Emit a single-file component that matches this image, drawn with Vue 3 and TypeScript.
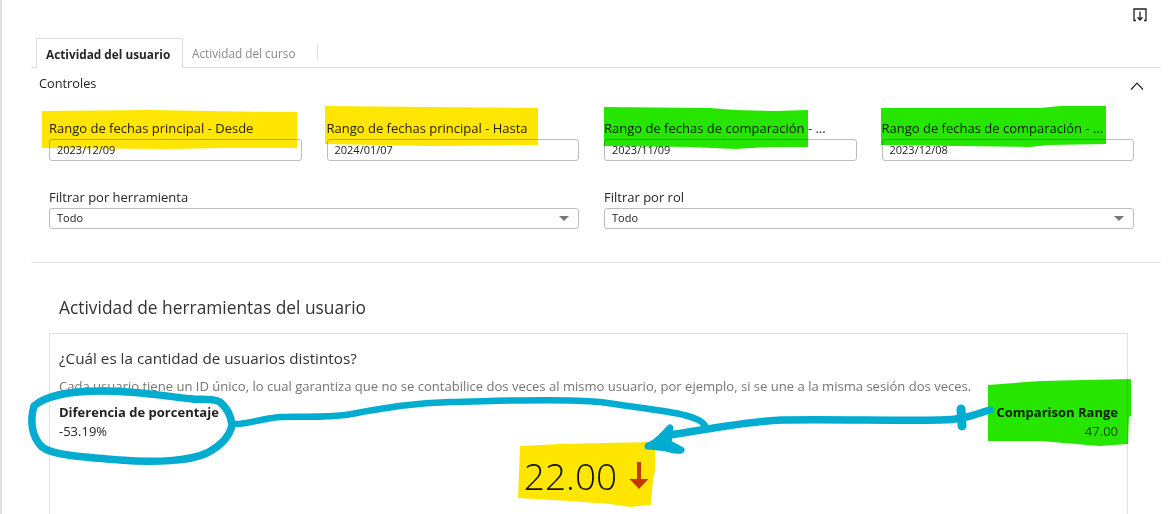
<template>
  <div class="page">
    <div class="content">
      <div class="toolbar">
        <svg class="export-icon" width="14" height="14" viewBox="0 0 14 14" fill="none">
          <path d="M3 12.500H1V1h12v11.500h-2" stroke="#222" stroke-width="1.3" />
          <path d="M7 3.500v8M4.500 9.200 7 12l2.500-2.800" stroke="#222" stroke-width="1.3" />
        </svg>
      </div>

      <div class="tabs">
        <div class="tab active">Actividad del usuario</div>
        <div class="tab">Actividad del curso</div>
      </div>

      <div class="controls-head">
        <span>Controles</span>
        <svg width="14" height="8" viewBox="0 0 14 8" fill="none">
          <path d="M1 7.500 7 1.200l6 6.300" stroke="#222" stroke-width="1.2" />
        </svg>
      </div>

      <div class="filters">
        <div v-for="d in dateFields" :key="d.label + d.value" class="field">
          <label>{{ d.label }}</label>
          <div class="control">{{ d.value }}</div>
        </div>
        <div v-for="s in selectFields" :key="s" class="field wide">
          <label>{{ s }}</label>
          <div class="control select">
            <span>Todo</span>
            <i class="caret"></i>
          </div>
        </div>
      </div>

      <div class="section">
        <h2>Actividad de herramientas del usuario</h2>
        <div class="card">
          <h3>¿Cuál es la cantidad de usuarios distintos?</h3>
          <p class="desc">
            Cada usuario tiene un ID único, lo cual garantiza que no se contabilice dos veces al mismo usuario, por ejemplo, si se une a la misma sesión dos veces.
          </p>
          <div class="metrics">
            <div class="metric">
              <strong>Diferencia de porcentaje</strong>
              <span>-53.19%</span>
            </div>
            <div class="metric right">
              <strong>Comparison Range</strong>
              <span class="muted">47.00</span>
            </div>
          </div>
          <div class="big-value">
            <span>22.00</span>
            <svg width="20" height="28" viewBox="0 0 20 28">
              <path d="M8 0h4v17h7.500L10 27 .5 17H8z" fill="#c43e00" />
            </svg>
          </div>
        </div>
      </div>
    </div>

    <!-- marker highlights drawn over the screenshot -->
    <svg class="overlay multiply" width="1170" height="514" viewBox="0 0 1170 514">
      <path v-for="(h, i) in highlights" :key="i" :d="h.d" :fill="h.fill" />
    </svg>

    <svg class="overlay" width="1170" height="514" viewBox="0 0 1170 514" fill="none" stroke="#00acd0" stroke-linecap="round" stroke-linejoin="round">
      <path stroke-width="7.500" d="M220 402C212 398 200 400 193 399C170 397 140 391 100 391C70 391 45 396 34 406C30 420 31 436 42 447C52 455 80 457 120 460C155 463 190 461 207 453C220 446 230 436 232 425C231 415 226 407 220 402Z" />
      <path stroke-width="6.500" d="M235 424C250 424 258 419 280 417C300 416 320 418 345 415C380 409 410 403 450 402C500 401 560 398 600 402C640 408 670 411 684 415C696 418 703 421 705 426" />
      <path stroke-width="7.500" d="M990 410C975 414 965 420 940 420C900 421 830 419 782 420C750 421 710 429 670 435" />
      <path stroke-width="9" d="M961 409 962 426" />
      <path stroke-width="7" fill="#00acd0" d="M648 446C656 444 664 434 670 428L668 443 681 450C675 452 668 447 658 447Z" />
    </svg>
  </div>
</template>

<script setup lang="ts">
interface Highlight {
  d: string
  fill: string
}

const dateFields = [
  { label: 'Rango de fechas principal - Desde', value: '2023/12/09' },
  { label: 'Rango de fechas principal - Hasta', value: '2024/01/07' },
  { label: 'Rango de fechas de comparación - ...', value: '2023/11/09' },
  { label: 'Rango de fechas de comparación - ...', value: '2023/12/08' }
]

const selectFields = ['Filtrar por herramienta', 'Filtrar por rol']

const yellow = '#ffe600'
const green = '#26e600'

const highlights: Highlight[] = [
  { d: 'M42 111 150 110 270 112 297 112 297 148 220 148 170 149 42 148Z', fill: yellow },
  { d: 'M325 106 430 107 538 108 538 145 430 146 325 144Z', fill: yellow },
  { d: 'M604 107 710 108 735 110 775 111 808 110 808 147 770 147 735 149 690 147 604 146Z', fill: green },
  { d: 'M881 108 1040 108 1060 106 1106 106 1106 144 1050 145 1030 147 881 145Z', fill: green },
  { d: 'M988 385 1040 381 1131 379 1131 416 1129 417 1128 444 1100 446 1040 441 988 441Z', fill: green },
  { d: 'M520 446 560 444 605 443 655 442 655 470 653 480 651 505 630 507 610 504 570 501 518 498Z', fill: yellow }
]
</script>

<style scoped>
.page {
  position: relative;
  width: 1170px;
  height: 514px;
  overflow: hidden;
  background: #fff;
  font-family: 'Open Sans', 'Liberation Sans', sans-serif;
  color: #262626;
}

.content {
  height: 100%;
  box-sizing: border-box;
  border-left: 2px solid #e0e0e0;
  padding-left: 29px;
  padding-right: 9px;
}

.toolbar {
  display: flex;
  justify-content: flex-end;
  height: 38px;
  padding: 8px 14px 0 0;
  box-sizing: border-box;
}

.tabs {
  display: flex;
  height: 30px;
  box-sizing: border-box;
  padding-left: 5px;
  border-bottom: 1px solid #dedede;
}

.tab {
  padding: 0 22px 0 9px;
  height: 30px;
  box-sizing: border-box;
  line-height: 30px;
  font-size: 11.8px;
  color: #8a8a8a;
  position: relative;
}

.tab:not(.active)::after {
  content: '';
  position: absolute;
  right: 0;
  top: 6px;
  height: 15px;
  border-right: 1px solid #dcdcdc;
}

.tab.active {
  width: 147px;
  padding: 0 0 0 9px;
  background: #fff;
  border: 1px solid #dedede;
  border-bottom: none;
  color: #262626;
  font-weight: 700;
  height: 30px;
}

.controls-head {
  display: flex;
  justify-content: space-between;
  align-items: center;
  height: 30px;
  padding: 0 17px 0 8px;
  font-size: 12.75px;
  color: #222;
}

.controls-head svg {
  margin-top: 6px;
}

.filters {
  display: grid;
  grid-template-columns: repeat(4, 252.5px);
  column-gap: 25px;
  row-gap: 26px;
  margin: 20px 0 0 18px;
}

.field {
  display: flex;
  flex-direction: column;
}

.field.wide {
  grid-column: span 2;
}

.field label {
  font-size: 13px;
  line-height: 20px;
  margin-bottom: 1px;
  color: #262626;
}

.control {
  height: 22px;
  box-sizing: border-box;
  border: 1px solid #bdbdbd;
  border-radius: 3px;
  padding-left: 7px;
  font-size: 11px;
  line-height: 20px;
  color: #222;
  background: #fff;
}

.select {
  height: 21px;
  display: flex;
  justify-content: space-between;
  align-items: center;
  padding-right: 9px;
  padding-bottom: 1px;
}

.caret {
  width: 0;
  height: 0;
  border-left: 5px solid transparent;
  border-right: 5px solid transparent;
  border-top: 5px solid #777;
}

.section {
  margin-top: 33px;
  border-top: 1px solid #e2e2e2;
}

h2 {
  margin: 33px 0 0 28px;
  font-size: 17.35px;
  line-height: 23px;
  font-weight: 400;
  color: #333;
}

.card {
  margin: 14px 0 0 18px;
  width: 1079px;
  height: 240px;
  box-sizing: border-box;
  border: 1px solid #e2e2e2;
  padding: 14px 9px 0;
}

h3 {
  margin: 0;
  font-size: 15.25px;
  line-height: 20px;
  font-weight: 400;
  color: #333;
}

.desc {
  margin: 10px 0 0;
  font-size: 13.05px;
  line-height: 17px;
  color: #757575;
  white-space: nowrap;
}

.metrics {
  display: flex;
  justify-content: space-between;
  margin-top: 8px;
}

.metric {
  display: flex;
  flex-direction: column;
  font-size: 13px;
  line-height: 19px;
}

.metric strong {
  font-weight: 700;
  color: #222;
}

.metric.right {
  text-align: right;
}

.muted {
  color: #555;
}

.big-value {
  display: flex;
  align-items: center;
  justify-content: center;
  gap: 12px;
  margin: 10px 0 0 -4px;
  font-size: 37px;
  line-height: 50px;
  font-weight: 350;
  color: #111;
}

.overlay {
  position: absolute;
  left: 0;
  top: 0;
  pointer-events: none;
}

.multiply {
  mix-blend-mode: multiply;
}
</style>
